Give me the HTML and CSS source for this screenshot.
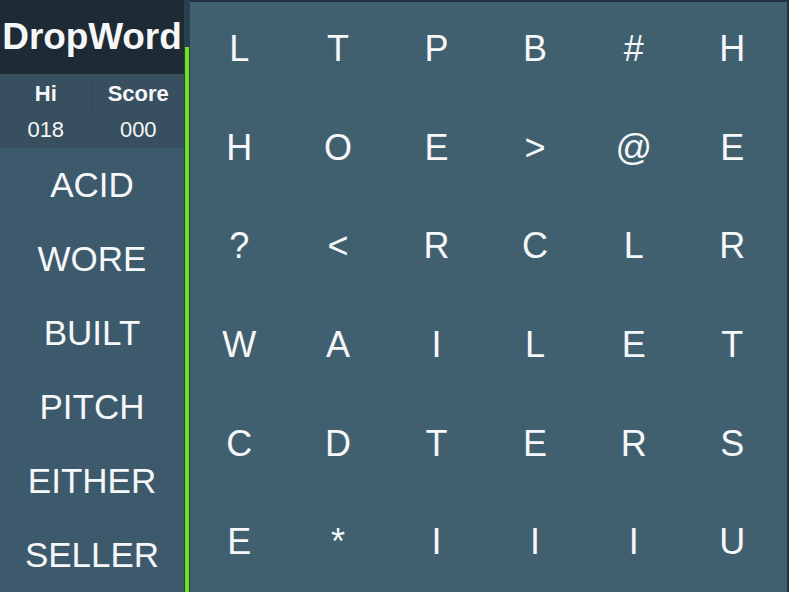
FILE: index.html
```html
<!DOCTYPE html>
<html>
<head>
<meta charset="utf-8">
<link rel="stylesheet" href="styles.css">
</head>
<body>
<div class="app">
  <aside class="side">
    <div class="title">DropWord</div>
    <div class="scores">
      <div class="scol">
        <div class="slabel">Hi</div>
        <div class="sval">018</div>
      </div>
      <div class="sdiv"></div>
      <div class="scol">
        <div class="slabel">Score</div>
        <div class="sval">000</div>
      </div>
    </div>
    <ul class="words">
      <li>ACID</li>
      <li>WORE</li>
      <li>BUILT</li>
      <li>PITCH</li>
      <li>EITHER</li>
      <li>SELLER</li>
    </ul>
  </aside>
  <div class="track"><div class="fill"></div></div>
  <main class="board">
    <div class="grid">
      <span>L</span><span>T</span><span>P</span><span>B</span><span>#</span><span>H</span>
      <span>H</span><span>O</span><span>E</span><span>&gt;</span><span>@</span><span>E</span>
      <span>?</span><span>&lt;</span><span>R</span><span>C</span><span>L</span><span>R</span>
      <span>W</span><span>A</span><span>I</span><span>L</span><span>E</span><span>T</span>
      <span>C</span><span>D</span><span>T</span><span>E</span><span>R</span><span>S</span>
      <span>E</span><span>*</span><span>I</span><span>I</span><span>I</span><span>U</span>
    </div>
  </main>
</div>
</body>
</html>
```
FILE: styles.css
```css
* { box-sizing: border-box; }
html, body {
  margin: 0;
  padding: 0;
  width: 789px;
  height: 592px;
  overflow: hidden;
  background: #1f2b34;
  font-family: "Liberation Sans", Arial, sans-serif;
  color: #f5f7f9;
}
.app {
  display: flex;
  width: 789px;
  height: 592px;
}
.side {
  width: 184px;
  display: flex;
  flex-direction: column;
  background: #3d5a6d;
}
.title {
  height: 74px;
  background: #1f2b34;
  font-weight: bold;
  font-size: 37px;
  display: flex;
  align-items: center;
  justify-content: center;
  letter-spacing: -0.1px;
}
.scores {
  height: 74px;
  background: #374f5e;
  display: flex;
  align-items: flex-start;
}
.scol {
  flex: 1;
  display: flex;
  flex-direction: column;
  align-items: center;
  padding-top: 7px;
}
.sdiv {
  width: 1px;
  height: 32px;
  margin-top: 6px;
  background: #2f4452;
}
.slabel {
  font-weight: bold;
  font-size: 22px;
  line-height: 26px;
}
.sval {
  font-size: 22px;
  line-height: 26px;
  margin-top: 10px;
}
.words {
  list-style: none;
  margin: 0;
  padding: 0;
  flex: 1;
  display: flex;
  flex-direction: column;
}
.words li {
  height: 74px;
  display: flex;
  align-items: center;
  justify-content: center;
  font-size: 35px;
}
.track {
  width: 6px;
  background: #2a3f4e;
  display: flex;
  flex-direction: column;
  justify-content: flex-end;
  padding-left: 1px;
}
.fill {
  height: 545px;
  width: 4px;
  background: #6fe21c;
}
.board {
  flex: 1;
  background: #41606f;
  border-top: 2px solid #22323e;
  border-right: 2px solid #22323e;
}
.grid {
  display: grid;
  grid-template-columns: repeat(6, 98.6px);
  grid-template-rows: repeat(6, 98.6px);
  margin-top: -2px;
}
.grid span {
  display: flex;
  align-items: center;
  justify-content: center;
  font-size: 36px;
}
```
